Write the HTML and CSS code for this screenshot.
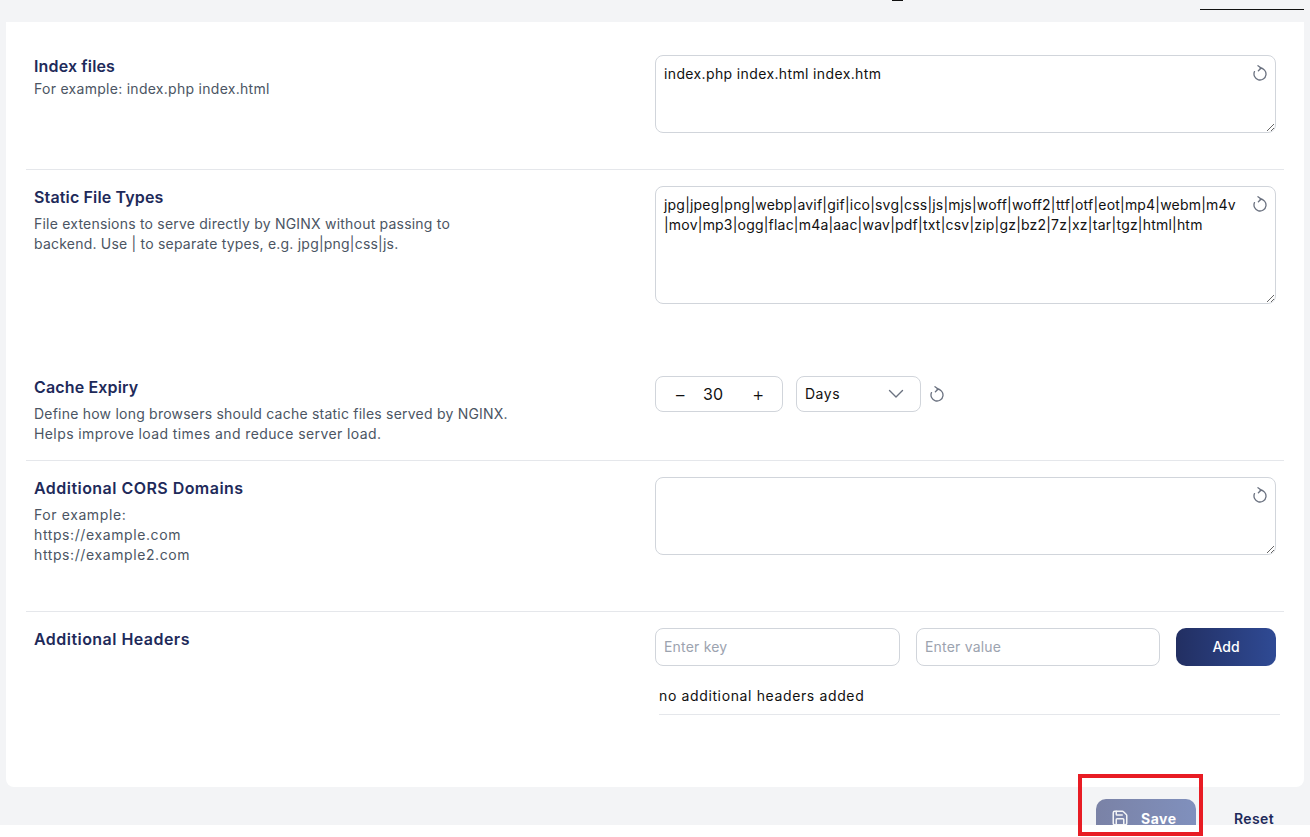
FILE: index.html
```html
<!DOCTYPE html>
<html lang="en">
<head>
<meta charset="utf-8">
<title>NGINX settings</title>
<link rel="stylesheet" href="styles.css">
</head>
<body>
<svg class="sprite" width="0" height="0" aria-hidden="true">
  <symbol id="refresh" viewBox="0 0 16 16"><path d="M8 3A6 6 0 1 1 2.5 6.6" fill="none" stroke="currentColor" stroke-width="1.3" stroke-linecap="round"/><path d="M6 .7 9.2 3 6.4 5.8" fill="none" stroke="currentColor" stroke-width="1.3" stroke-linecap="round" stroke-linejoin="round"/></symbol>
</svg>
<div class="page">
  <div class="top-strip"><span class="scrap-a"></span><span class="scrap-b"></span></div>
  <main class="card">
    <section class="row row-index">
      <div class="label-col">
        <h3 class="title">Index files</h3>
        <p class="desc sp-28">For example: index.php index.html</p>
      </div>
      <div class="field">
        <textarea class="area area-sm sp-37">index.php index.html index.htm</textarea>
        <svg class="refresh refresh-in"><use href="#refresh"/></svg>
      </div>
    </section>
    <section class="row row-static">
      <div class="label-col">
        <h3 class="title">Static File Types</h3>
        <p class="desc desc-gap sp-21">File extensions to serve directly by NGINX without passing to<br>backend. Use | to separate types, e.g. jpg|png|css|js.</p>
      </div>
      <div class="field">
        <textarea class="area area-lg sp-20">jpg|jpeg|png|webp|avif|gif|ico|svg|css|js|mjs|woff|woff2|ttf|otf|eot|mp4|webm|m4v
|mov|mp3|ogg|flac|m4a|aac|wav|pdf|txt|csv|zip|gz|bz2|7z|xz|tar|tgz|html|htm</textarea>
        <svg class="refresh refresh-in"><use href="#refresh"/></svg>
      </div>
    </section>
    <section class="row row-cache">
      <div class="label-col">
        <h3 class="title">Cache Expiry</h3>
        <p class="desc desc-gap sp-22">Define how long browsers should cache static files served by NGINX.<br><span class="sp-40">Helps improve load times and reduce server load.</span></p>
      </div>
      <div class="cache-controls">
        <div class="stepper"><span class="step">−</span><span class="step-val">30</span><span class="step">+</span></div>
        <div class="select">
          <span>Days</span>
          <svg class="chev" viewBox="0 0 16 16"><path d="M1.5 4.5 8 11l6.5-6.5" fill="none" stroke="currentColor" stroke-width="1.4" stroke-linecap="round" stroke-linejoin="round"/></svg>
        </div>
        <svg class="refresh"><use href="#refresh"/></svg>
      </div>
    </section>
    <section class="row row-cors">
      <div class="label-col">
        <h3 class="title title-wide">Additional CORS Domains</h3>
        <p class="desc desc-gap sp-60">For example:<br>https://example.com<br>https://example2.com</p>
      </div>
      <div class="field">
        <textarea class="area area-sm"></textarea>
        <svg class="refresh refresh-in"><use href="#refresh"/></svg>
      </div>
    </section>
    <section class="row row-headers">
      <div class="label-col">
        <h3 class="title title-wide">Additional Headers</h3>
      </div>
      <div>
        <div class="header-form">
          <input class="input input-key" placeholder="Enter key">
          <input class="input input-value" placeholder="Enter value">
          <button class="btn-add">Add</button>
        </div>
        <p class="empty">no additional headers added</p>
      </div>
    </section>
  </main>
  <footer class="actions">
    <button class="btn-save">
      <svg class="save-icon" viewBox="0 0 24 24" fill="none" stroke="currentColor" stroke-width="2" stroke-linecap="round" stroke-linejoin="round"><path d="M15.2 3a2 2 0 0 1 1.4.6l3.8 3.8a2 2 0 0 1 .6 1.4V19a2 2 0 0 1-2 2H5a2 2 0 0 1-2-2V5a2 2 0 0 1 2-2z"/><path d="M17 21v-7a1 1 0 0 0-1-1H8a1 1 0 0 0-1 1v7"/><path d="M7 3v4a1 1 0 0 0 1 1h7"/></svg>
      <span>Save</span>
    </button>
    <button class="btn-reset">Reset</button>
  </footer>
</div>
<div class="highlight"></div>
</body>
</html>
```
FILE: styles.css
```css
* { box-sizing: border-box; }
html, body { margin: 0; padding: 0; background: #fff; }
body {
  position: relative;
  height: 837px;
  overflow: hidden;
  font-family: "Inter", "Open Sans", sans-serif;
  color: #111;
}
.sprite { position: absolute; }
.page {
  height: 825px;
  background: #f3f4f6;
  overflow: hidden;
}
.top-strip { height: 22px; display: flex; align-items: flex-start; }
.scrap-a { width: 11px; height: 1px; margin-left: 892px; background: #111; }
.scrap-b { width: 104px; height: 1px; margin-left: 297px; margin-top: 9px; background: #111; }
.card {
  margin: 0 6px;
  height: 765px;
  padding: 17px 20px 0;
  background: #fff;
  border-radius: 0 0 8px 8px;
}
.row {
  display: grid;
  grid-template-columns: 621px 621px;
  padding: 16px 8px 0;
}
.row-index { height: 131px; border-bottom: 1px solid #e5e7eb; }
.row-static { height: 190px; }
.row-cache { height: 101px; border-bottom: 1px solid #e5e7eb; }
.row-cors { height: 151px; border-bottom: 1px solid #e5e7eb; }
.label-col { margin-top: -1px; }
.title {
  margin: 0;
  font-size: 16px;
  line-height: 24px;
  font-weight: 600;
  letter-spacing: 0.15px;
  color: #1e2a5a;
}
.title-wide { letter-spacing: 0.46px; }
.desc {
  margin: 0;
  padding-top: 1px;
  font-size: 14px;
  line-height: 20px;
  color: #4b5563;
}
.desc-gap { margin-top: 4px; }
.sp-20 { letter-spacing: 0.2px; }
.sp-21 { letter-spacing: 0.21px; }
.sp-22 { letter-spacing: 0.22px; }
.sp-28 { letter-spacing: 0.28px; }
.sp-37 { letter-spacing: 0.37px; }
.sp-40 { letter-spacing: 0.4px; }
.sp-60 { letter-spacing: 0.6px; }
.field { position: relative; }
.area {
  display: block;
  width: 100%;
  padding: 8px 38px 8px 8px;
  border: 1px solid #d1d5db;
  border-radius: 8px;
  background: #fff;
  color: #111;
  font: 400 14px/20px "Inter", "Open Sans", sans-serif;
  white-space: pre;
  outline: none;
}
.area-sm { height: 78px; }
.area-lg { height: 118px; }
.refresh { display: block; width: 16px; height: 16px; color: #6b7280; }
.refresh-in { position: absolute; top: 10px; right: 8px; }
.cache-controls { display: flex; align-items: flex-start; }
.stepper {
  display: flex;
  align-items: center;
  justify-content: space-between;
  width: 128px;
  height: 36px;
  padding: 0 18px;
  border: 1px solid #d1d5db;
  border-radius: 8px;
  font-size: 16px;
}
.step { color: #111; width: 12px; text-align: center; font-size: 19px; font-weight: 300; }
.step-val { color: #111; margin-right: 12px; margin-top: -1px; }
.select {
  display: flex;
  align-items: center;
  justify-content: space-between;
  width: 125px;
  height: 36px;
  margin-left: 13px;
  padding: 0 16px 1px 8px;
  border: 1px solid #d1d5db;
  border-radius: 8px;
  font-size: 14px;
  letter-spacing: 0.5px;
}
.chev { width: 16px; height: 16px; color: #6b7280; }
.cache-controls .refresh { margin: 10px 0 0 8px; }
.header-form { display: flex; align-items: stretch; height: 38px; }
.input {
  height: 38px;
  padding: 0 8px 1px;
  border: 1px solid #d1d5db;
  border-radius: 8px;
  font: 400 14px "Inter", "Open Sans", sans-serif;
  letter-spacing: 0.2px;
  outline: none;
}
.input::placeholder { color: #9ca3af; }
.input-key { width: 245px; }
.input-value { width: 244px; margin-left: 16px; }
.btn-add {
  width: 100px;
  margin-left: 16px;
  padding: 0 0 1px;
  border: 0;
  border-radius: 10px;
  background: linear-gradient(90deg, #222f62, #2f4a94);
  color: #fff;
  font: 500 14px "Inter", "Open Sans", sans-serif;
}
.empty {
  width: 621px;
  margin: 0 0 0 4px;
  padding: 20px 0 8px;
  border-bottom: 1px solid #e5e7eb;
  font-size: 14px;
  line-height: 20px;
  letter-spacing: 0.63px;
  color: #111;
}
.actions {
  display: flex;
  align-items: flex-start;
  padding: 12px 0 0 1096px;
}
.btn-save {
  display: flex;
  align-items: center;
  width: 100px;
  height: 38px;
  padding: 0 0 0 15px;
  border: 0;
  border-radius: 10px;
  background: linear-gradient(90deg, #7a82a6, #8090bd);
  color: #fff;
  font: 700 14px "Inter", "Open Sans", sans-serif;
  letter-spacing: 0.5px;
}
.save-icon { width: 18px; height: 18px; margin-right: 12px; color: #f3f4f6; }
.btn-reset {
  margin-left: 38px;
  padding: 0;
  height: 38px;
  border: 0;
  background: none;
  color: #1e2a5a;
  font: 600 14px "Inter", "Open Sans", sans-serif;
  letter-spacing: 0.4px;
}
.highlight {
  position: absolute;
  left: 1078px;
  top: 774px;
  width: 125px;
  height: 62px;
  border: 4px solid #e81c24;
}
```
